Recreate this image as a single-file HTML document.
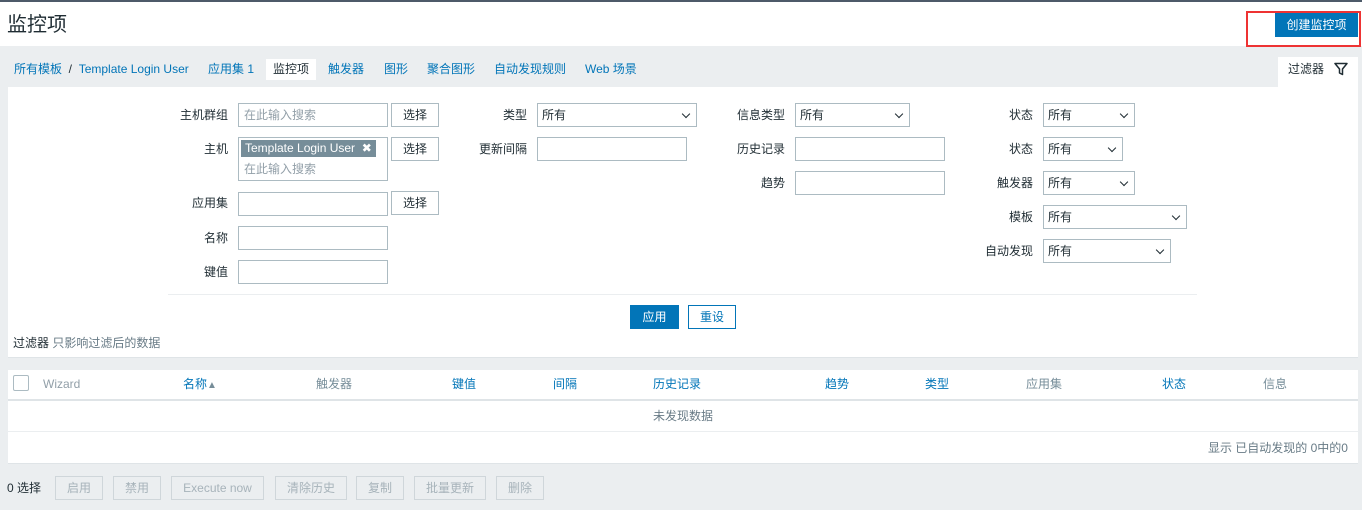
<!DOCTYPE html>
<html><head><meta charset="utf-8"><style>
*{margin:0;padding:0;box-sizing:border-box}
body{width:1362px;height:510px;background:#ebeef0;font-family:"Liberation Sans","Noto Sans CJK SC",sans-serif;font-size:12px;color:#1f2c33;position:relative;overflow:hidden}
.a{position:absolute}
.lbl{position:absolute;text-align:right;line-height:24px;white-space:nowrap}
.in{position:absolute;height:24px;background:#fff;border:1px solid #acbbc2}
.sel{position:absolute;height:24px;background:#fff;border:1px solid #acbbc2;line-height:22px;padding-left:4px}
.sel:after{content:"";position:absolute;right:7px;top:7px;width:5px;height:5px;border-right:1px solid #1f2c33;border-bottom:1px solid #1f2c33;transform:rotate(45deg)}
.btn{position:absolute;height:24px;background:#fff;border:1px solid #acbbc2;text-align:center;line-height:22px}
.ph{color:#929fa8}
.lnk{color:#0275b8}
.hd{position:absolute;top:376px;line-height:16px}
.dis{position:absolute;top:476px;height:24px;border:1px solid #cfd6da;background:#ebeef0;color:#a7b3ba;text-align:center;line-height:22px}
</style></head><body>
<div class="a" style="left:0;top:0;width:1362px;height:2px;background:#4d5a69"></div>
<div class="a" style="left:0;top:2px;width:1362px;height:44px;background:#fff"></div>
<div class="a" style="left:7px;top:11px;font-size:20px;line-height:28px">监控项</div>
<div class="a" style="left:1246px;top:11px;width:115px;height:36px;border:2px solid #e33"></div>
<div class="a" style="left:1275px;top:13px;width:83px;height:24px;background:#0275b8;color:#fff;text-align:center;line-height:24px">创建监控项</div>

<div class="a lnk" style="left:14px;top:61px;line-height:16px;white-space:nowrap">所有模板 <span style="color:#1f2c33">&nbsp;/&nbsp;</span> Template Login User</div>
<div class="a lnk" style="left:208px;top:61px;line-height:16px">应用集 1</div>
<div class="a" style="left:266px;top:59px;width:50px;height:21px;background:#fff;line-height:21px;text-align:center">监控项</div>
<div class="a lnk" style="left:328px;top:61px;line-height:16px">触发器</div>
<div class="a lnk" style="left:384px;top:61px;line-height:16px">图形</div>
<div class="a lnk" style="left:427px;top:61px;line-height:16px">聚合图形</div>
<div class="a lnk" style="left:494px;top:61px;line-height:16px">自动发现规则</div>
<div class="a lnk" style="left:585px;top:61px;line-height:16px">Web 场景</div>
<div class="a" style="left:1278px;top:57px;width:80px;height:32px;background:#fff"></div>
<div class="a" style="left:1288px;top:61px;line-height:16px">过滤器</div>
<svg class="a" style="left:1334px;top:62px" width="14" height="14" viewBox="0 0 14 14"><path d="M1 1.5H13L8.5 7V12.5L5.5 11V7Z" fill="none" stroke="#1f2c33" stroke-width="1.5" stroke-linejoin="round"/></svg>

<div class="a" style="left:8px;top:87px;width:1350px;height:271px;background:#fff;border-bottom:1px solid #dfe4e7"></div>

<div class="lbl" style="right:1134px;top:103px">主机群组</div>
<div class="in" style="left:238px;top:103px;width:150px;padding-left:5px;line-height:22px"><span class="ph">在此输入搜索</span></div>
<div class="btn" style="left:391px;top:103px;width:48px">选择</div>
<div class="lbl" style="right:1134px;top:137px">主机</div>
<div class="in" style="left:238px;top:137px;width:150px;height:44px"></div>
<div class="a" style="left:241px;top:140px;width:135px;height:17px;background:#768d99;color:#fff;line-height:17px;padding-left:4px;white-space:nowrap">Template Login User&nbsp;&nbsp;✖</div>
<div class="a ph" style="left:244px;top:161px;line-height:16px">在此输入搜索</div>
<div class="btn" style="left:391px;top:137px;width:48px">选择</div>
<div class="lbl" style="right:1134px;top:191px">应用集</div>
<div class="in" style="left:238px;top:192px;width:150px"></div>
<div class="btn" style="left:391px;top:191px;width:48px">选择</div>
<div class="lbl" style="right:1134px;top:226px">名称</div>
<div class="in" style="left:238px;top:226px;width:150px"></div>
<div class="lbl" style="right:1134px;top:260px">键值</div>
<div class="in" style="left:238px;top:260px;width:150px"></div>

<div class="lbl" style="right:835px;top:103px">类型</div>
<div class="sel" style="left:537px;top:103px;width:160px">所有</div>
<div class="lbl" style="right:835px;top:137px">更新间隔</div>
<div class="in" style="left:537px;top:137px;width:150px"></div>

<div class="lbl" style="right:577px;top:103px">信息类型</div>
<div class="sel" style="left:795px;top:103px;width:115px">所有</div>
<div class="lbl" style="right:577px;top:137px">历史记录</div>
<div class="in" style="left:795px;top:137px;width:150px"></div>
<div class="lbl" style="right:577px;top:171px">趋势</div>
<div class="in" style="left:795px;top:171px;width:150px"></div>

<div class="lbl" style="right:329px;top:103px">状态</div>
<div class="sel" style="left:1043px;top:103px;width:92px">所有</div>
<div class="lbl" style="right:329px;top:137px">状态</div>
<div class="sel" style="left:1043px;top:137px;width:80px">所有</div>
<div class="lbl" style="right:329px;top:171px">触发器</div>
<div class="sel" style="left:1043px;top:171px;width:92px">所有</div>
<div class="lbl" style="right:329px;top:205px">模板</div>
<div class="sel" style="left:1043px;top:205px;width:144px">所有</div>
<div class="lbl" style="right:329px;top:239px">自动发现</div>
<div class="sel" style="left:1043px;top:239px;width:128px">所有</div>

<div class="a" style="left:168px;top:294px;width:1029px;height:1px;background:#ebeef0"></div>
<div class="a" style="left:630px;top:305px;width:49px;height:24px;background:#0275b8;color:#fff;text-align:center;line-height:24px">应用</div>
<div class="a" style="left:688px;top:305px;width:48px;height:24px;border:1px solid #0275b8;color:#0275b8;text-align:center;line-height:22px">重设</div>
<div class="a" style="left:13px;top:335px;line-height:16px">过滤器 <span style="color:#687b86">只影响过滤后的数据</span></div>

<div class="a" style="left:8px;top:370px;width:1350px;height:94px;background:#fff;border-bottom:1px solid #dfe4e7"></div>
<div class="a" style="left:8px;top:399px;width:1350px;height:2px;background:#dfe4e7"></div>
<div class="a" style="left:8px;top:431px;width:1350px;height:1px;background:#ebeef0"></div>
<div class="a" style="left:13px;top:375px;width:16px;height:16px;border:1px solid #acbbc2;border-radius:2px"></div>
<div class="hd" style="left:43px;color:#929fa8">Wizard</div>
<div class="hd lnk" style="left:183px">名称<span style="color:#768d99;font-size:10px">▲</span></div>
<div class="hd" style="left:316px;color:#768d99">触发器</div>
<div class="hd lnk" style="left:452px">键值</div>
<div class="hd lnk" style="left:553px">间隔</div>
<div class="hd lnk" style="left:653px">历史记录</div>
<div class="hd lnk" style="left:825px">趋势</div>
<div class="hd lnk" style="left:925px">类型</div>
<div class="hd" style="left:1026px;color:#768d99">应用集</div>
<div class="hd lnk" style="left:1162px">状态</div>
<div class="hd" style="left:1263px;color:#768d99">信息</div>
<div class="a" style="left:653px;top:408px;color:#687b86;line-height:16px">未发现数据</div>
<div class="a" style="right:14px;top:440px;color:#687b86;line-height:16px">显示 已自动发现的 0中的0</div>

<div class="a" style="left:7px;top:480px;line-height:16px">0 选择</div>
<div class="dis" style="left:55px;width:48px">启用</div>
<div class="dis" style="left:113px;width:48px">禁用</div>
<div class="dis" style="left:171px;width:93px">Execute now</div>
<div class="dis" style="left:275px;width:72px">清除历史</div>
<div class="dis" style="left:356px;width:48px">复制</div>
<div class="dis" style="left:414px;width:72px">批量更新</div>
<div class="dis" style="left:496px;width:48px">删除</div>
</body></html>
